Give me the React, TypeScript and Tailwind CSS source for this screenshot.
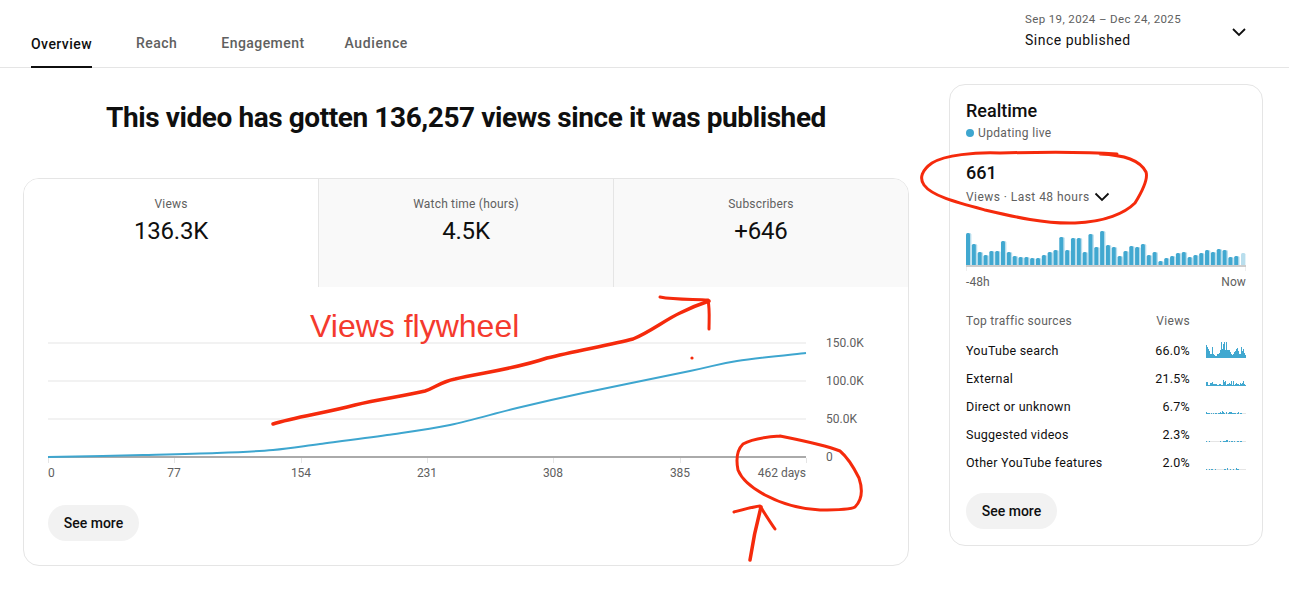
const barHeights = [33,22,14,11,15,15,25,14,10,9,9,8,8,11,14,16,29,16,28,28,14,32,19,35,21,19,10,15,20,19,22,11,14,5,8,10,13,14,9,11,13,16,14,17,16,9,10,13];

const sparks = [
  [13,11,9,7,4,4,11,4,3,2,2,4,4,5,8,16,9,14,16,8,16,8,8,8,6,4,3,4,6,7,9,10,7,4,4,11,7,9,5,3],
  [4,4,1,1,3,3,4,2,2,2,2,1,1,2,2,1,1,6,4,5,1,2,2,3,2,5,1,5,1,2,3,2,2,1,3,2,3,5,2,1],
  [2,1,1,1,0,1,0,1,0,1,1,0,1,1,2,1,3,2,1,0,2,0,1,2,2,2,1,1,1,1,0,1,2,0,1,1,0,0,0,0],
  [1,0,0,1,0,0,0,0,0,0,0,0,0,0,1,0,0,1,1,1,2,2,0,1,0,1,1,0,1,0,0,1,1,0,1,1,0,0,0,0],
  [1,0,0,1,0,1,1,0,0,1,0,0,0,0,0,0,0,0,1,1,0,2,0,0,1,0,0,1,0,0,2,1,1,0,0,0,0,0,0,0],
];

const sources = [
  ["YouTube search", "66.0%"],
  ["External", "21.5%"],
  ["Direct or unknown", "6.7%"],
  ["Suggested videos", "2.3%"],
  ["Other YouTube features", "2.0%"],
];

const metrics = [
  ["Views", "136.3K"],
  ["Watch time (hours)", "4.5K"],
  ["Subscribers", "+646"],
];

const xLabels = ["0", "77", "154", "231", "308", "385"];
const xTicks = [0, 126, 253, 379, 505, 632, 758];

const linePoints: [number, number][] = [[24,170],[119,168],[193,166],[249,163],[296,157],[363,148],[426,138],[493,121],[559,106],[666,84],[713,74],[782,66]];

function smoothPath(p: [number, number][]) {
  let d = `M${p[0][0]} ${p[0][1]}`;
  for (let i = 0; i < p.length - 1; i++) {
    const a = p[Math.max(i - 1, 0)], b = p[i], c = p[i + 1], e = p[Math.min(i + 2, p.length - 1)];
    d += ` C${b[0] + (c[0] - a[0]) / 6} ${b[1] + (c[1] - a[1]) / 6} ${c[0] - (e[0] - b[0]) / 6} ${c[1] - (e[1] - b[1]) / 6} ${c[0]} ${c[1]}`;
  }
  return d;
}

function Spark({ data }: { data: number[] }) {
  return (
    <svg width="40" height="20" viewBox="0 0 40 20" className="block">
      <rect x="0" y="19" width="40" height="1" fill="#e5e5e5" />
      {data.map((h, i) =>
        h > 0 ? <rect key={i} x={i} y={20 - h} width="1" height={h} fill="#41a8d0" /> : null
      )}
    </svg>
  );
}

function LineChart() {
  return (
    <svg width="884" height="200" viewBox="0 0 884 200" className="block" style={{ fontFamily: "Roboto, sans-serif" }}>
      {[55, 93, 131].map((y) => (
        <rect key={y} x="24" y={y} width="758" height="2" fill="#f2f2f2" />
      ))}
      <rect x="24" y="169" width="758" height="2" fill="#aaaaaa" />
      {xTicks.map((x) => (
        <rect key={x} x={x + 24} y="171" width="1" height="5" fill="#e5e5e5" />
      ))}
      <path fill="none" stroke="#3ea6cf" strokeWidth="2" d={smoothPath(linePoints)} />
      {["150.0K", "100.0K", "50.0K", "0"].map((t, i) => (
        <text key={t} x="802" y={60 + i * 38} fontSize="12" fill="#606060">{t}</text>
      ))}
      {xLabels.map((t, i) => (
        <text key={t} x={i === 0 ? 24 : xTicks[i] + 24} y="190" fontSize="12" fill="#606060" textAnchor={i === 0 ? "start" : "middle"}>{t}</text>
      ))}
      <text x="782" y="190" fontSize="12" fill="#606060" textAnchor="end">462 days</text>
    </svg>
  );
}

function Annotations() {
  const red = "#f52a0c";
  return (
    <>
      <svg width="1289" height="590" viewBox="0 0 1289 590" className="absolute left-0 top-0 pointer-events-none" fill="none" stroke={red} strokeLinecap="round" strokeLinejoin="round">
        <path strokeWidth="3.5" d="M273 424 C295 417 325 413 355 405 C380 399 405 396 425 391 C435 388 440 382 455 379 C480 373 515 369 547 358 C575 351 610 345 633 339 C650 332 665 320 680 313 C690 308 700 304 709 301" />
        <path strokeWidth="3" d="M660 297 C675 300 695 299 708 300 C710 310 709 320 709 329" />
        <path strokeWidth="3" d="M1117 154 C1090 152 1040 152 1000 153 C975 152 945 155 932 163 C922 170 919 178 924 185 C932 196 955 202 985 210 C1015 217 1045 224 1075 223 C1105 222 1125 213 1135 203 C1143 190 1148 178 1146 172 C1140 160 1125 155 1100 154" />
        <path strokeWidth="3" d="M780 436 C765 437 752 439 743 444 C737 450 736 460 738 470 C742 480 752 488 765 495 C780 503 800 509 820 510 C835 510 850 510 855 507 C862 500 863 490 859 478 C853 466 846 456 840 451 C825 445 805 441 780 436" />
        <path strokeWidth="3" d="M734 512 C745 509 752 507 760 506 C765 514 770 522 775 529" />
        <path strokeWidth="3.5" d="M750 560 C753 540 757 522 761 507" />
        <circle cx="692" cy="358" r="1.6" fill={red} stroke="none" />
      </svg>
      <div className="absolute left-[310px] top-[308px] text-[32px] leading-[36px] text-[#f43a2e]" style={{ fontFamily: '"Liberation Sans", sans-serif' }}>
        Views flywheel
      </div>
    </>
  );
}

export default function App() {
  return (
    <div className="relative w-[1289px] h-[590px] bg-white overflow-hidden text-[#0f0f0f]" style={{ fontFamily: "Roboto, sans-serif" }}>
      <header className="flex justify-between h-[68px] border-b border-[#e5e5e5] pl-[31px] pr-[43px]">
        <nav className="flex gap-[44px] items-end text-[14px] font-medium tracking-[0.45px] text-[#606060]">
          {["Overview", "Reach", "Engagement", "Audience"].map((t, i) => (
            <div key={t} className={i === 0 ? "h-[48px] leading-[48px] border-b-2 border-[#0f0f0f] text-[#0f0f0f] -mb-px" : i === 3 ? "h-[48px] leading-[48px] -ml-[4px] tracking-[0.6px]" : "h-[48px] leading-[48px]"}>
              {t}
            </div>
          ))}
        </nav>
        <div className="flex items-start gap-[51px] pt-[13px]">
          <div className="w-[156px]">
            <div className="text-[11.5px] leading-[13px] tracking-[0.38px] text-[#606060] whitespace-nowrap">Sep 19, 2024 – Dec 24, 2025</div>
            <div className="text-[14px] leading-[18px] mt-[5px] tracking-[0.5px]">Since published</div>
          </div>
          <svg width="14" height="10" viewBox="0 0 14 10" className="mt-[14px]" fill="none" stroke="#0f0f0f" strokeWidth="1.8">
            <path d="M1 2 L7 8 L13 2" />
          </svg>
        </div>
      </header>

      <main className="flex gap-[40px] pl-[23px]">
        <div className="w-[886px]">
          <h1 className="h-[110px] pt-[32px] text-center text-[28px] leading-[36px] font-bold tracking-[-0.42px]">
            This video has gotten 136,257 views since it was published
          </h1>
          <section className="h-[388px] rounded-[16px] border border-[#e5e5e5] overflow-hidden">
            <div className="grid grid-cols-[294px_295px_1fr] h-[108px]">
              {metrics.map(([label, value], i) => (
                <div key={label} className={i === 0 ? "text-center bg-white pt-[17px]" : "text-center bg-[#f9f9f9] border-l border-[#e5e5e5] pt-[17px]"}>
                  <div className="text-[12px] leading-[16px] tracking-[0.2px] text-[#606060]">{label}</div>
                  <div className="text-[24px] leading-[28px] mt-[5px] tracking-[-0.2px]">{value}</div>
                </div>
              ))}
            </div>
            <LineChart />
            <button className="ml-[24px] mt-[18px] h-[36px] w-[91px] rounded-full bg-[#f2f2f2] text-[14px] font-medium">See more</button>
          </section>
        </div>

        <aside className="w-[314px] h-[462px] mt-[16px] rounded-[16px] border border-[#e5e5e5] px-[16px] pt-[15px]">
          <div className="text-[18px] leading-[22px] font-medium">Realtime</div>
          <div className="flex items-center gap-[4px] mt-[2px] text-[12px] leading-[18px] tracking-[0.35px] text-[#606060]">
            <span className="w-[8px] h-[8px] rounded-full bg-[#3ea6cf]" />
            Updating live
          </div>
          <div className="text-[18px] leading-[22px] font-medium mt-[20px]">661</div>
          <div className="flex items-center gap-[4px] mt-[3px] text-[12px] leading-[20px] tracking-[0.45px] text-[#606060]">
            Views · Last 48 hours
            <svg width="16" height="10" viewBox="0 0 16 10" fill="none" stroke="#0f0f0f" strokeWidth="1.8">
              <path d="M1.5 1.5 L8 8 L14.5 1.5" />
            </svg>
          </div>
          <svg width="280" height="42" viewBox="0 0 280 42" className="block mt-[22px]">
            {barHeights.map((h, i) => (
              <g key={i}>
                <rect x={i * 5.83 + 1} y={37 - h} width="4.4" height={h} rx="1.5" fill="#b9deed" />
                {i < 47 && <rect x={i * 5.83} y={37 - h} width="4" height={h} rx="1.5" fill="#41a8d0" />}
              </g>
            ))}
            <rect x="0" y="36" width="280" height="2" fill="#cccccc" />
            <rect x="0" y="38" width="1" height="4" fill="#eeeeee" />
            <rect x="279" y="38" width="1" height="4" fill="#eeeeee" />
          </svg>
          <div className="flex justify-between mt-[2px] text-[12px] leading-[18px] tracking-[0.1px] text-[#606060]">
            <span>-48h</span>
            <span>Now</span>
          </div>
          <div className="flex mt-[22px] text-[12px] leading-[16px] tracking-[0.3px] text-[#606060]">
            <span className="flex-1">Top traffic sources</span>
            <span>Views</span>
            <span className="w-[56px]" />
          </div>
          <div className="mt-[8px] flex flex-col">
            {sources.map(([name, pct], i) => (
              <div key={name} className="flex items-center h-[28px] text-[12.5px] tracking-[0.25px]">
                <span className="flex-1 text-[#0f0f0f]">{name}</span>
                <span className="text-right">{pct}</span>
                <span className="ml-[16px] mb-[6px]"><Spark data={sparks[i]} /></span>
              </div>
            ))}
          </div>
          <button className="mt-[16px] h-[36px] w-[91px] rounded-full bg-[#f2f2f2] text-[14px] font-medium">See more</button>
        </aside>
      </main>
      <Annotations />
    </div>
  );
}
